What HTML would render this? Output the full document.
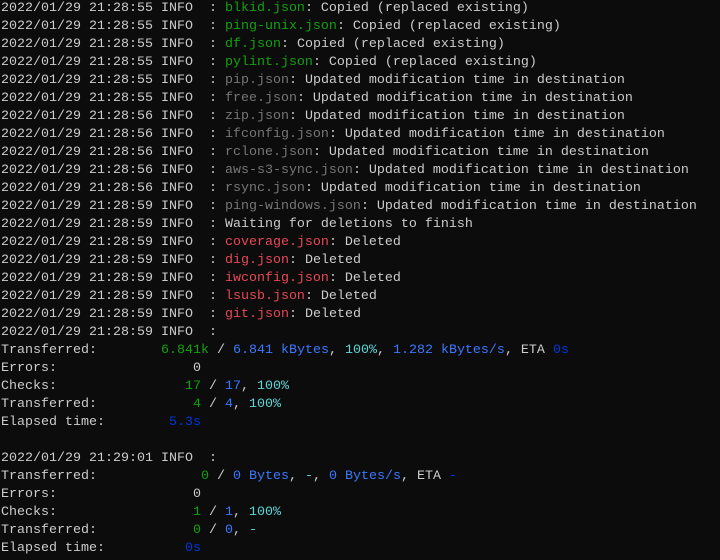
<!DOCTYPE html>
<html><head><meta charset="utf-8"><style>
html,body{margin:0;padding:0;background:#0c0c0c;width:720px;height:560px;overflow:hidden}
pre{margin:0;padding:0 0 0 1px;font-family:"Liberation Mono",monospace;font-size:13.33px;line-height:18px;color:#cccccc;white-space:pre}
.g{color:#13a10e}.b{color:#3b78ff}.c{color:#61d6d6}.d{color:#0037da}.r{color:#e74856}.k{color:#767676}
</style></head><body><pre>2022/01/29 21:28:55 INFO  : <span class="g">blkid.json</span>: Copied (replaced existing)
2022/01/29 21:28:55 INFO  : <span class="g">ping-unix.json</span>: Copied (replaced existing)
2022/01/29 21:28:55 INFO  : <span class="g">df.json</span>: Copied (replaced existing)
2022/01/29 21:28:55 INFO  : <span class="g">pylint.json</span>: Copied (replaced existing)
2022/01/29 21:28:55 INFO  : <span class="k">pip.json</span>: Updated modification time in destination
2022/01/29 21:28:55 INFO  : <span class="k">free.json</span>: Updated modification time in destination
2022/01/29 21:28:56 INFO  : <span class="k">zip.json</span>: Updated modification time in destination
2022/01/29 21:28:56 INFO  : <span class="k">ifconfig.json</span>: Updated modification time in destination
2022/01/29 21:28:56 INFO  : <span class="k">rclone.json</span>: Updated modification time in destination
2022/01/29 21:28:56 INFO  : <span class="k">aws-s3-sync.json</span>: Updated modification time in destination
2022/01/29 21:28:56 INFO  : <span class="k">rsync.json</span>: Updated modification time in destination
2022/01/29 21:28:59 INFO  : <span class="k">ping-windows.json</span>: Updated modification time in destination
2022/01/29 21:28:59 INFO  : Waiting for deletions to finish
2022/01/29 21:28:59 INFO  : <span class="r">coverage.json</span>: Deleted
2022/01/29 21:28:59 INFO  : <span class="r">dig.json</span>: Deleted
2022/01/29 21:28:59 INFO  : <span class="r">iwconfig.json</span>: Deleted
2022/01/29 21:28:59 INFO  : <span class="r">lsusb.json</span>: Deleted
2022/01/29 21:28:59 INFO  : <span class="r">git.json</span>: Deleted
2022/01/29 21:28:59 INFO  :
Transferred:        <span class="g">6.841k</span> / <span class="b">6.841 kBytes</span>, <span class="c">100%</span>, <span class="b">1.282 kBytes/s</span>, ETA <span class="d">0s</span>
Errors:                 0
Checks:                <span class="g">17</span> / <span class="b">17</span>, <span class="c">100%</span>
Transferred:            <span class="g">4</span> / <span class="b">4</span>, <span class="c">100%</span>
Elapsed time:        <span class="d">5.3s</span>

2022/01/29 21:29:01 INFO  :
Transferred:             <span class="g">0</span> / <span class="b">0 Bytes</span>, <span class="c">-</span>, <span class="b">0 Bytes/s</span>, ETA <span class="d">-</span>
Errors:                 0
Checks:                 <span class="g">1</span> / <span class="b">1</span>, <span class="c">100%</span>
Transferred:            <span class="g">0</span> / <span class="b">0</span>, <span class="c">-</span>
Elapsed time:          <span class="d">0s</span>
</pre></body></html>
